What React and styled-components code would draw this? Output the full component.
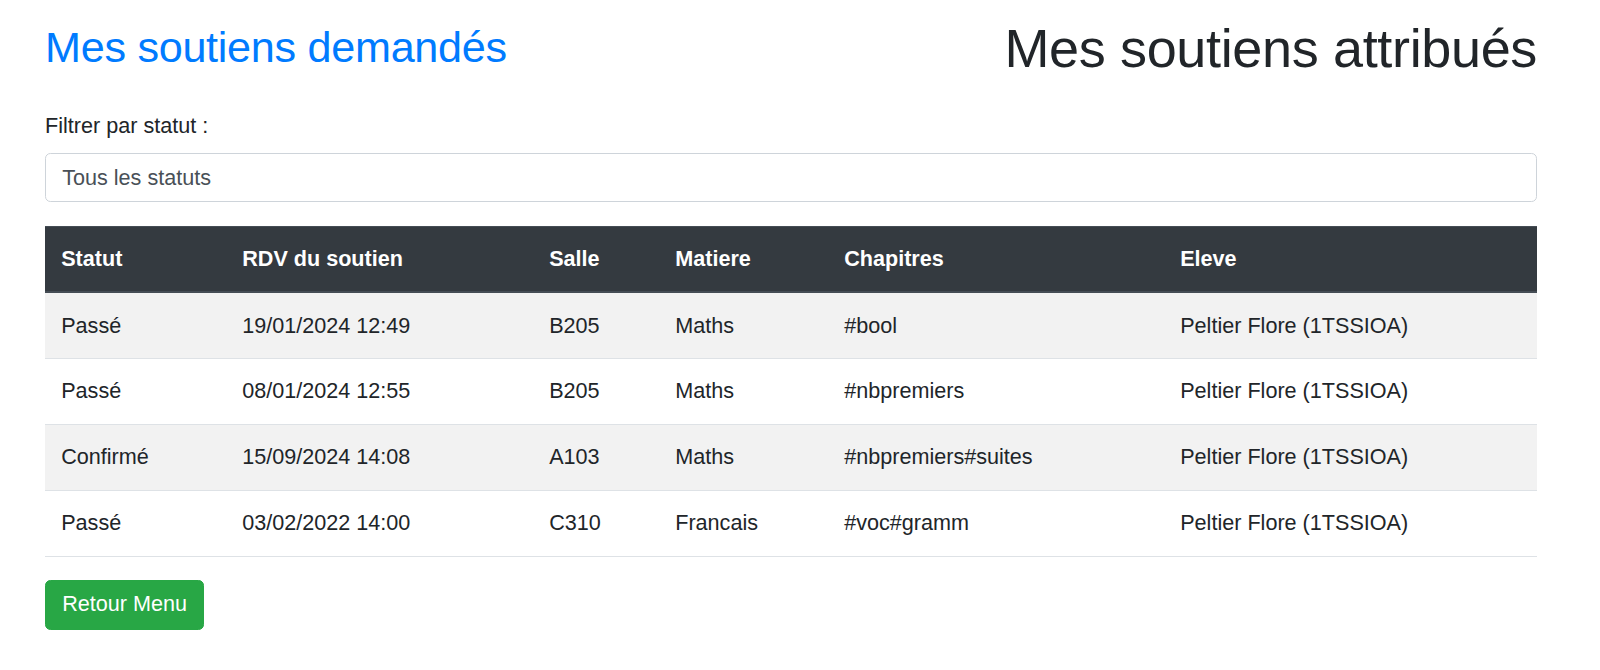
import React from 'react'
import styled, { createGlobalStyle } from 'styled-components'

const rows = [
    { statut: 'Passé', rdv: '19/01/2024 12:49', salle: 'B205', matiere: 'Maths', chapitres: '#bool', eleve: 'Peltier Flore (1TSSIOA)' },
    { statut: 'Passé', rdv: '08/01/2024 12:55', salle: 'B205', matiere: 'Maths', chapitres: '#nbpremiers', eleve: 'Peltier Flore (1TSSIOA)' },
    { statut: 'Confirmé', rdv: '15/09/2024 14:08', salle: 'A103', matiere: 'Maths', chapitres: '#nbpremiers#suites', eleve: 'Peltier Flore (1TSSIOA)' },
    { statut: 'Passé', rdv: '03/02/2022 14:00', salle: 'C310', matiere: 'Francais', chapitres: '#voc#gramm', eleve: 'Peltier Flore (1TSSIOA)' },
]

const columns = [
    { key: 'statut', label: 'Statut', width: 181 },
    { key: 'rdv', label: 'RDV du soutien', width: 307 },
    { key: 'salle', label: 'Salle', width: 126 },
    { key: 'matiere', label: 'Matiere', width: 169 },
    { key: 'chapitres', label: 'Chapitres', width: 336 },
    { key: 'eleve', label: 'Eleve', width: 373 },
]

export default function App() {
    return (
        <>
            <GlobalStyle />
            <Page>
                <TitleRow>
                    <TitleLink>Mes soutiens demandés</TitleLink>
                    <MainTitle>Mes soutiens attribués</MainTitle>
                </TitleRow>

                <FilterGroup>
                    <FilterLabel htmlFor="statut">Filtrer par statut :</FilterLabel>
                    <StatusSelect id="statut" defaultValue="">
                        <option value="">Tous les statuts</option>
                        <option value="passe">Passé</option>
                        <option value="confirme">Confirmé</option>
                    </StatusSelect>
                </FilterGroup>

                <Table>
                    <colgroup>
                        {columns.map(c => <col key={c.key} width={c.width} />)}
                    </colgroup>
                    <thead>
                        <tr>
                            {columns.map(c => <HeadCell key={c.key}>{c.label}</HeadCell>)}
                        </tr>
                    </thead>
                    <tbody>
                        {rows.map((r, i) => (
                            <Row key={i} $striped={i % 2 === 0}>
                                {columns.map(c => <Cell key={c.key}>{r[c.key]}</Cell>)}
                            </Row>
                        ))}
                    </tbody>
                </Table>

                <BackButton type="button">Retour Menu</BackButton>
            </Page>
        </>
    )
}

const GlobalStyle = createGlobalStyle`
    body {
        margin: 0;
        background: #fff;
        color: #212529;
        font-family: "Liberation Sans", Arial, sans-serif;
        font-size: 21.6px;
        line-height: 1.5;
    }
`

const Page = styled.div`
    width: 1492px;
    margin-left: 45px;
    padding-top: 15.6px;
`

const TitleRow = styled.div`
    display: flex;
    justify-content: space-between;
    align-items: center;
    margin-bottom: 29.6px;
`

const TitleLink = styled.h2`
    margin: 0;
    font-size: 43.2px;
    font-weight: 500;
    line-height: 1.2;
    letter-spacing: -0.3px;
    color: #007bff;
`

const MainTitle = styled.h1`
    margin: 0;
    font-size: 54px;
    font-weight: 500;
    line-height: 1.2;
    letter-spacing: -0.35px;
    color: #212529;
`

const FilterGroup = styled.div`
    display: flex;
    flex-direction: column;
    margin-bottom: 23.5px;
`

const FilterLabel = styled.label`
    display: block;
    line-height: 32.4px;
    margin-bottom: 10.8px;
`

const StatusSelect = styled.select`
    appearance: none;
    -webkit-appearance: none;
    box-sizing: border-box;
    width: 100%;
    height: 49px;
    padding: 0 16.2px;
    border: 1px solid #ced4da;
    border-radius: 5.4px;
    background: #fff;
    color: #495057;
    font-family: inherit;
    font-size: 21.6px;
`

const Table = styled.table`
    width: 100%;
    table-layout: fixed;
    border-collapse: collapse;
    margin-bottom: 23px;
    color: #212529;
`

const HeadCell = styled.th`
    padding: 16.2px;
    line-height: 32.4px;
    text-align: left;
    vertical-align: bottom;
    font-weight: 700;
    color: #fff;
    background: #343a40;
    border-top: 1px solid #454d55;
    border-bottom: 2px solid #454d55;
    white-space: nowrap;
`

const Row = styled.tr`
    background: ${p => (p.$striped ? '#f2f2f2' : '#fff')};
    border-bottom: 1px solid #dee2e6;
`

const Cell = styled.td`
    padding: 16.2px;
    line-height: 32.4px;
    vertical-align: top;
    white-space: nowrap;
`

const BackButton = styled.button`
    display: inline-block;
    height: 50px;
    padding: 0 16.2px;
    border: 1px solid #28a745;
    border-radius: 5.4px;
    background: #28a745;
    color: #fff;
    font-family: inherit;
    font-size: 21.6px;
    line-height: 32.4px;
    cursor: pointer;
`
